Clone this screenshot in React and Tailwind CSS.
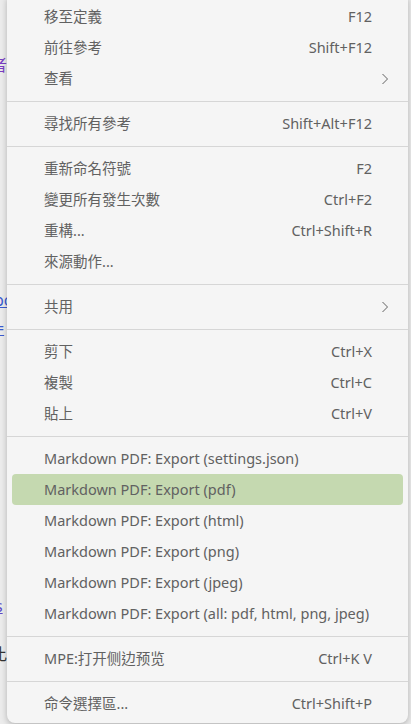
import React from 'react';

const FONT = { fontFamily: '"Noto Sans", "Noto Sans CJK TC", sans-serif' };

const groups = [
  [
    { label: '移至定義', key: 'F12' },
    { label: '前往參考', key: 'Shift+F12' },
    { label: '查看', sub: true },
  ],
  [{ label: '尋找所有參考', key: 'Shift+Alt+F12' }],
  [
    { label: '重新命名符號', key: 'F2' },
    { label: '變更所有發生次數', key: 'Ctrl+F2' },
    { label: '重構...', key: 'Ctrl+Shift+R' },
    { label: '來源動作...' },
  ],
  [{ label: '共用', sub: true }],
  [
    { label: '剪下', key: 'Ctrl+X' },
    { label: '複製', key: 'Ctrl+C' },
    { label: '貼上', key: 'Ctrl+V' },
  ],
  [
    { label: 'Markdown PDF: Export (settings.json)' },
    { label: 'Markdown PDF: Export (pdf)', active: true },
    { label: 'Markdown PDF: Export (html)' },
    { label: 'Markdown PDF: Export (png)' },
    { label: 'Markdown PDF: Export (jpeg)' },
    { label: 'Markdown PDF: Export (all: pdf, html, png, jpeg)' },
  ],
  [{ label: 'MPE:打开侧边预览', key: 'Ctrl+K V' }],
  [{ label: '命令選擇區...', key: 'Ctrl+Shift+P' }],
];

function Chevron() {
  return (
    <svg width="8" height="12" viewBox="0 0 8 12" fill="none" className="text-[#616161]">
      <path d="M1.5 1 L6.5 6 L1.5 11" stroke="currentColor" strokeWidth="1" />
    </svg>
  );
}

function MenuItem({ item }) {
  return (
    <div
      className={`mx-[5px] h-[31px] flex items-center rounded-[4px] pl-[32px] pr-[31px] text-[14.5px] text-[#616161] ${
        item.active ? 'bg-[#c5d9b0]' : ''
      }`}
    >
      <span className="flex-1 whitespace-nowrap">{item.label}</span>
      {item.key && <span className="whitespace-nowrap">{item.key}</span>}
      {item.sub && (
        <span className="-mr-[17px] flex items-center">
          <Chevron />
        </span>
      )}
    </div>
  );
}

export default function App() {
  return (
    <div className="relative w-[411px] h-[724px] overflow-hidden bg-[#ececec]" style={FONT}>
      {/* editor text behind the menu */}
      <div className="text-[16px] leading-[20px]">
        <div className="mt-[55px] -ml-[9px] text-[#7b3fc4]">者</div>
        <div className="mt-[215px] -ml-[6px] text-[#3a5bd0] underline">po</div>
        <div className="mt-[8px] -ml-[5px] text-[#3a5bd0] underline">=</div>
        <div className="mt-[258px] -ml-[5px] text-[#5a4bc8] underline">s</div>
        <div className="mt-[28px] -ml-[9px] text-[#333]">比</div>
      </div>

      {/* context menu */}
      <div className="absolute left-[7px] top-[-3px] w-[401px] pt-[4px] pb-[4px] bg-[#f5f5f5] rounded-b-[8px] shadow-[0_2px_6px_rgba(0,0,0,0.25)]">
        {groups.map((g, gi) => (
          <div key={gi}>
            {gi > 0 && (
              <div className="h-[14px] flex items-center">
                <div className="w-full h-px bg-[#d6d6d6]" />
              </div>
            )}
            {g.map((item, ii) => (
              <MenuItem key={ii} item={item} />
            ))}
          </div>
        ))}
      </div>
    </div>
  );
}
